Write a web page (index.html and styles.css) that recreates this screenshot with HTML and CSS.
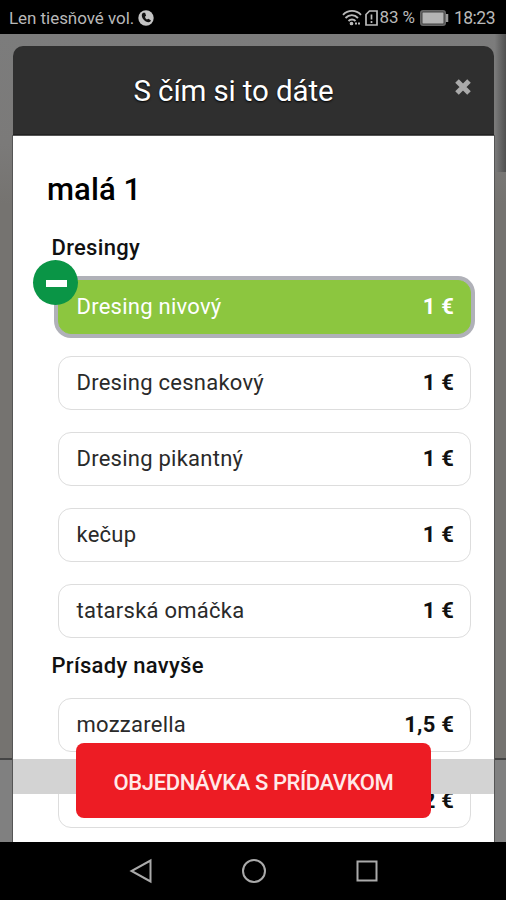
FILE: index.html
```html
<!DOCTYPE html>
<html lang="sk">
<head>
<meta charset="utf-8">
<title>S čím si to dáte</title>
<link rel="stylesheet" href="styles.css">
</head>
<body>
<div class="phone">
  <header class="status">
    <span class="carrier">Len tiesňové vol.</span>
    <svg class="call" width="16" height="16" viewBox="0 0 16 16"><circle cx="8" cy="8" r="7.7" fill="#c4c4c4"/><path d="M5.200 2.800C3.400 3.800 3.300 6.600 5.300 9.200c2.200 2.700 5.200 3.900 7.100 2.400l.6-1.200-2.600-1.700-1.500.9C8 8.900 7.200 7.900 6.900 6.700l1.200-1-1-2.900z" fill="#111"/></svg>
    <span class="spacer"></span>
    <svg class="wifi" width="20" height="17" viewBox="0 0 20 17" fill="none" stroke="#bbb" stroke-width="1.9"><path d="M1 5.800C6 .6 14 .6 19 5.800M3.500 9c3.700-3.800 9-3.800 12.500 0M6.500 12c2-2 5-2 7 0"/><circle cx="9.500" cy="14.500" r=".9" fill="#bbb"/><path d="M13 14.500h5" stroke-dasharray="2 1"/></svg>
    <svg class="sim" width="13" height="16" viewBox="0 0 13 16" fill="none" stroke="#bbb" stroke-width="1.700"><path d="M4.500 1H12v14H1V4.500zM6.500 4.500v5M6.500 11v2"/></svg>
    <span class="percent">83 %</span>
    <svg class="battery" width="29" height="16" viewBox="0 0 29 16"><rect x="1" y="1" width="24" height="14" rx="2" fill="#b4b4b4" stroke="#666" stroke-width="2"/><rect x="2" y="2" width="22" height="12" rx="1" fill="none" stroke="#444"/><path d="M27 4v8" stroke="#999" stroke-width="2.500"/></svg>
    <span class="clock">18:23</span>
  </header>

  <main class="screen">
    <section class="modal">
      <div class="modal-head">
        <h1>S čím si to dáte</h1>
        <svg class="close" width="18" height="18" viewBox="0 0 18 18"><path d="M3 3l12 12M15 3L3 15" stroke="#aaa" stroke-width="5"/></svg>
      </div>
      <div class="modal-body">
        <h2>malá 1</h2>
        <h3>Dresingy</h3>
        <ul class="options">
          <li class="option selected"><span class="name">Dresing nivový</span><b>1 €</b>
            <span class="minus"><i></i></span></li>
          <li class="option"><span class="name">Dresing cesnakový</span><b>1 €</b></li>
          <li class="option"><span class="name">Dresing pikantný</span><b>1 €</b></li>
          <li class="option"><span class="name">kečup</span><b>1 €</b></li>
          <li class="option"><span class="name">tatarská omáčka</span><b>1 €</b></li>
        </ul>
        <h3 class="extra">Prísady navyše</h3>
        <ul class="options">
          <li class="option"><span class="name">mozzarella</span><b>1,5 €</b></li>
          <li class="option"><b>2 €</b></li>
        </ul>
      </div>
      <div class="band"></div>
      <button class="order">OBJEDNÁVKA S PRÍDAVKOM</button>
    </section>
  </main>

  <nav class="nav">
    <svg width="24" height="28" viewBox="0 0 24 28"><path d="M21.500 3.500v21L2.500 14z"/></svg>
    <svg width="26" height="28" viewBox="0 0 26 28"><circle cx="13" cy="14" r="11"/></svg>
    <svg width="24" height="28" viewBox="0 0 24 28"><path d="M2.500 4.500h19v19h-19z"/></svg>
  </nav>
</div>
</body>
</html>
```
FILE: styles.css
```css
* { box-sizing: border-box; }
body { margin: 0; font-family: Roboto, "Liberation Sans", sans-serif; }
h1, h2, h3, ul { margin: 0; padding: 0; list-style: none; }
.phone { width: 506px; height: 900px; display: flex; flex-direction: column; background: #000; overflow: hidden; }

.status { height: 34px; flex: none; display: flex; align-items: center; padding: 1px 11px 0 9px; color: #b9b9b9; font-size: 17px; }
.carrier { letter-spacing: -0.05px; }
.call { margin-left: 4px; }
.spacer { flex: 1; }
.sim { margin-left: 3px; }
.percent { margin-left: 2px; margin-top: -2px; letter-spacing: -0.1px; }
.battery { margin-left: 5px; }
.clock { margin-left: 5px; font-size: 17.500px; letter-spacing: -0.5px; }

.screen {
  height: 808px; flex: none; padding: 12px 12px 0 13px; overflow: hidden;
  background:
    linear-gradient(90deg, #7b7b7b, #505050) right top / 11px 138px no-repeat,
    linear-gradient(#444, #444) left 724px / 100% 2px no-repeat,
    linear-gradient(#7c7c7c 0, #7b7a79 110px, #757370 170px, #757370 724px, #808080 726px);
}
.modal { position: relative; height: 796px; }
.modal-head {
  height: 89px; display: flex; align-items: center; justify-content: center; position: relative;
  background: #2f2f2f; border-radius: 10px 10px 0 0; color: #fff; border-bottom: 1px solid #222;
}
.modal-head h1 { font-size: 29.500px; font-weight: 400; margin: 2px 40px 0 0; letter-spacing: -0.12px; text-shadow: 0 1px 2px #000; }
.close { position: absolute; right: 22px; top: 32px; }
.modal-body { height: 707px; background: #fff; border-top: 1px solid #555; box-shadow: -1px 0 #555, 1px 0 #555; padding: 34px 23px 0 45px; }
h2 { margin-left: -11px; font-size: 31px; font-weight: 500; line-height: 40px; color: #000; letter-spacing: 0.1px; }
h3 { margin: 24px 0 0 -6.500px; font-size: 22px; font-weight: 500; line-height: 28px; color: #111; letter-spacing: 0.3px; }
.options { display: flex; flex-direction: column; gap: 22px; margin-top: 18px; }
h3.extra { margin-top: 14px; }
.option {
  position: relative; height: 54px; display: flex; align-items: center; padding: 0 16px 1px 17.500px;
  border: 1.500px solid #ddd; border-radius: 13px; font-size: 22px; color: #2a2a2a;
}
.option b { margin-left: auto; font-weight: 700; color: #111; letter-spacing: 0.2px; }
.name { letter-spacing: 0.25px; }
.selected { background: #8cc63f; border-color: #8cc63f; box-shadow: 0 0 0 4px #b0b1b8; color: #fff; }
.selected b { color: #fff; }
.minus {
  position: absolute; left: -26px; top: -21px; width: 45px; height: 45px; border-radius: 50%;
  background: #0a9546; display: flex; align-items: center; justify-content: center;
}
.minus i { width: 21px; height: 7px; background: #fff; margin: 2px 0 0 2px; }
.band { position: absolute; left: 0; right: 0; top: 713px; height: 35px; background: #d3d3d3; }
.order {
  position: absolute; left: 63px; top: 697px; width: 355px; height: 75px; border: 0; border-radius: 8px; padding: 3px 0 0;
  background: #ed1c24; color: #ffe9e9; font: 500 22px Roboto, "Liberation Sans", sans-serif; letter-spacing: -0.4px; white-space: nowrap;
}
.nav { height: 58px; display: flex; align-items: center; justify-content: center; gap: 88px; padding-left: 1px; }
.nav svg { fill: none; stroke: #aaa; stroke-width: 2; }
```
